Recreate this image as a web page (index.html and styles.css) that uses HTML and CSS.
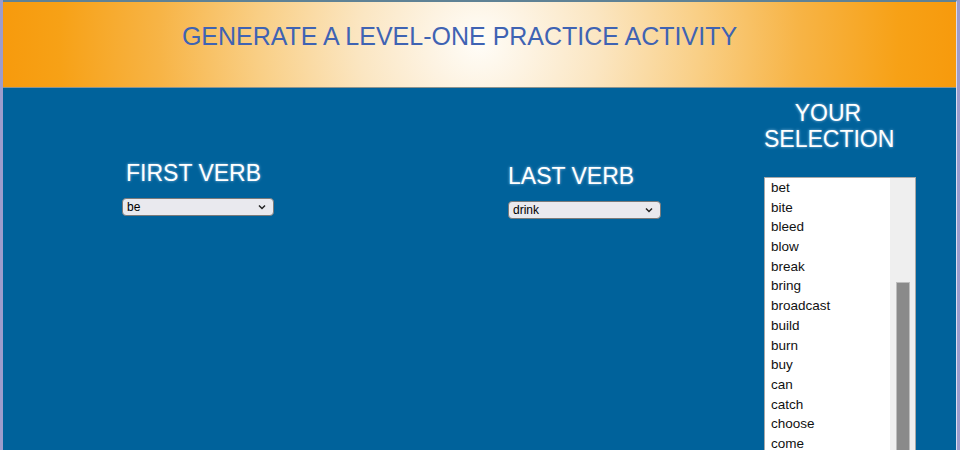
FILE: index.html
```html
<!DOCTYPE html>
<html>
<head>
<meta charset="utf-8">
<link rel="stylesheet" href="styles.css">
</head>
<body>
<div class="frame">
  <header class="banner">
    <h1 class="title">GENERATE A LEVEL-ONE PRACTICE ACTIVITY</h1>
  </header>
  <main class="panel">
    <section class="col col-first">
      <h2 class="label">FIRST VERB</h2>
      <div class="picker"><span class="picker-text">be</span>
        <svg class="chev" width="8" height="6" viewBox="0 0 8 6"><path d="M1 1.5 L4 4.5 L7 1.5" fill="none" stroke="#222" stroke-width="1.5"/></svg>
      </div>
    </section>
    <section class="col col-last">
      <h2 class="label">LAST VERB</h2>
      <div class="picker"><span class="picker-text">drink</span>
        <svg class="chev" width="8" height="6" viewBox="0 0 8 6"><path d="M1 1.5 L4 4.5 L7 1.5" fill="none" stroke="#222" stroke-width="1.5"/></svg>
      </div>
    </section>
    <section class="col col-sel">
      <h2 class="label sel-label">YOUR<br>SELECTION</h2>
      <div class="listbox">
        <ul class="items">
          <li>bet</li><li>bite</li><li>bleed</li><li>blow</li><li>break</li><li>bring</li><li>broadcast</li><li>build</li><li>burn</li><li>buy</li><li>can</li><li>catch</li><li>choose</li><li>come</li><li>cost</li>
        </ul>
        <div class="track"><div class="thumb"></div></div>
      </div>
    </section>
  </main>
</div>
</body>
</html>
```
FILE: styles.css
```css
html, body {
  margin: 0;
  padding: 0;
  height: 100%;
  overflow: hidden;
}
body {
  background: #9c9ccc;
  font-family: "Liberation Sans", Arial, sans-serif;
}
.frame {
  margin: 0 3px 0 3px;
  height: 100%;
  border-top: 2px solid #5f8295;
  border-right: 1px solid #dcdcef;
  background: #00629b;
  display: flex;
  flex-direction: column;
}
.banner {
  flex: 0 0 85px;
  height: 85px;
  border-bottom: 1px solid #8c9490;
  background: radial-gradient(circle at 476px 40px, #fffdf8 0px, #fdf3e2 50px, #fbe6c2 120px, #f9cf86 220px, #f7b446 320px, #f7a116 420px, #f79a0c 480px);
  display: flex;
  justify-content: center;
}
.title {
  margin: 20px 40px 0 0;
  font-size: 25px;
  line-height: 29px;
  font-weight: normal;
  color: #3f63b3;
}
.panel {
  flex: 1;
  display: grid;
  grid-template-columns: 386px 256px 152px;
  padding-left: 119px;
}
.label {
  margin: 0;
  font-size: 23px;
  font-weight: normal;
  color: #fff;
  text-shadow: 0 0 3px rgba(200, 228, 255, 0.7);
  line-height: 26px;
}
.col-first { padding-top: 72px; }
.col-first .label { padding-left: 4px; margin-bottom: 12px; }
.col-last { padding-top: 75px; }
.col-last .label { margin-bottom: 12px; }
.picker {
  box-sizing: border-box;
  width: 152px;
  height: 18px;
  border: 1px solid #7a7a7a;
  border-radius: 4px;
  background: #e9e9ee;
  display: flex;
  align-items: center;
  justify-content: space-between;
  padding: 0 7px 0 4px;
  font-size: 12px;
  color: #000;
}
.col-last .picker { width: 153px; }
.chev { display: block; }
.col-sel { padding-top: 12px; }
.sel-label {
  text-align: center;
  padding-right: 24px;
  margin-bottom: 25px;
}
.listbox {
  box-sizing: border-box;
  width: 152px;
  height: 300px;
  border: 1px solid #a8a8a8;
  background: #fff;
  display: flex;
  overflow: hidden;
}
.items {
  list-style: none;
  margin: 0;
  padding: 0 0 0 6px;
  flex: 1;
  font-size: 13.5px;
  color: #111;
}
.items li {
  height: 19.7px;
  line-height: 19.7px;
}
.track {
  width: 25px;
  background: #efefef;
  display: flex;
  justify-content: center;
}
.thumb {
  width: 12px;
  margin-top: 104px;
  height: 200px;
  background: #8a8a8a;
  border: 1px solid #bdbdbd;
}
```
